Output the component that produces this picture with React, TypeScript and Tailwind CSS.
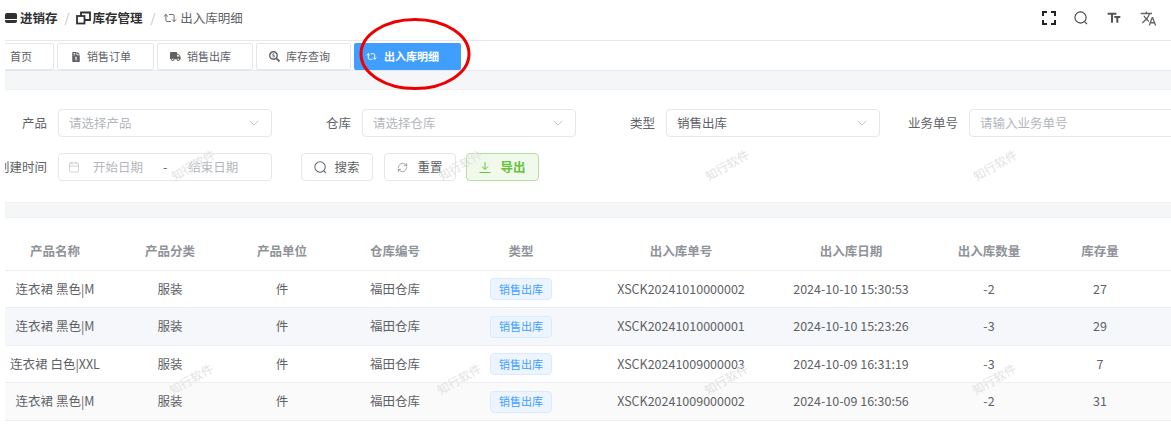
import React from "react";
import { ChevronDown, Calendar, RefreshCw, Repeat2 } from "lucide-react";
import { FaFileInvoiceDollar, FaTruck, FaSearchDollar } from "react-icons/fa";
import { MdTextFields, MdTranslate } from "react-icons/md";

const rows = [
  { name: "连衣裙 黑色|M", no: "XSCK20241010000002", date: "2024-10-10 15:30:53", qty: "-2", stock: "27", h: "h-[37px]", bg: "bg-white" },
  { name: "连衣裙 黑色|M", no: "XSCK20241010000001", date: "2024-10-10 15:23:26", qty: "-3", stock: "29", h: "h-[38px]", bg: "bg-[#f5f7fa]" },
  { name: "连衣裙 白色|XXL", no: "XSCK20241009000003", date: "2024-10-09 16:31:19", qty: "-3", stock: "7", h: "h-[37px]", bg: "bg-white" },
  { name: "连衣裙 黑色|M", no: "XSCK20241009000002", date: "2024-10-09 16:30:56", qty: "-2", stock: "31", h: "h-[38px]", bg: "bg-[#fafafa]" },
];

const cols = "grid grid-cols-[100px_130px_94px_132px_120px_200px_140px_136px_86px_28px] items-center text-center";

const marks = [
  { x: 169, y: 156 }, { x: 436, y: 156 }, { x: 703, y: 156 }, { x: 971, y: 156 },
  { x: 167, y: 370 }, { x: 435, y: 370 }, { x: 702, y: 370 }, { x: 970, y: 370 },
];

function SearchIcon({ size, color }: { size: number; color: string }) {
  return (
    <svg width={size} height={size} viewBox="0 0 14 14" fill="none" stroke={color} strokeWidth="1.1">
      <circle cx="6.5" cy="6.5" r="5.6" />
      <path d="M10.6 10.6l2.4 2.6" />
    </svg>
  );
}

function Tab({ icon, label, w, textGap }: { icon: React.ReactNode; label: string; w: string; textGap: string }) {
  return (
    <div className={`${w} h-[27px] pl-[12px] flex items-center ${textGap} bg-white border border-[#e4e7ed] rounded-[2px] text-[11px] text-[#606266]`}>
      {icon}
      <span>{label}</span>
    </div>
  );
}

function Field({ label, labelW, boxW, text, muted = true }: { label: string; labelW: string; boxW: string; text: string; muted?: boolean }) {
  return (
    <div className="flex items-center">
      <span className={`${labelW} text-right pr-[11px] text-[12.5px] text-[#606266]`}>{label}</span>
      <div className={`${boxW} h-[28px] flex items-center justify-between pl-[10px] pr-[9px] border border-[#e4e7ed] rounded-[4px] text-[12.5px] ${muted ? "text-[#b4b7bd]" : "text-[#606266]"}`}>
        <span>{text}</span>
        <ChevronDown size={16} strokeWidth={1} className="text-[#a8abb2]" />
      </div>
    </div>
  );
}

export default function App() {
  return (
    <div className="relative w-[1171px] h-[424px] overflow-hidden bg-white font-['Noto_Sans_CJK_SC','Noto_Sans',sans-serif]">
      {/* top bar */}
      <div className="h-[40px] pb-[4px] pl-[5px] pr-[14px] flex items-center justify-between">
        <div className="flex items-center text-[12.5px] font-bold text-[#303133]">
          <span className="w-[12px] h-[10px] mr-[3px] rounded-[2px] bg-[#303133] border-t-[3px] border-[#303133] flex items-center">
            <span className="w-full h-px bg-white" />
          </span>
          <span>进销存</span>
          <span className="mx-[7px] font-normal text-[#c0c4cc]">/</span>
          <svg width="15" height="14" viewBox="0 0 15 14" fill="none" stroke="#303133" strokeWidth="1.8" className="mr-[1px]">
            <rect x="1" y="5" width="7.5" height="7.5" />
            <path d="M5 5V1.5h9v7.5h-5.5" />
          </svg>
          <span>库存管理</span>
          <span className="mx-[8px] font-normal text-[#c0c4cc]">/</span>
          <Repeat2 size={14} className="text-[#606266] mr-[3px]" strokeWidth={1.6} />
          <span className="font-normal text-[#606266]">出入库明细</span>
        </div>
        <div className="flex items-center gap-[18px]">
          <svg width="14" height="14" viewBox="0 0 14 14" fill="none" stroke="#222" strokeWidth="2">
            <path d="M1 5V1h4M9 1h4v4M13 9v4H9M5 13H1V9" />
          </svg>
          <SearchIcon size={14} color="#444" />
          <MdTextFields size={16} className="text-[#555]" />
          <MdTranslate size={17} className="text-[#666]" />
        </div>
      </div>

      <div className="ml-[5px] border-t border-[#e6e8eb]">
        {/* tabs */}
        <div className="h-[30px] flex items-start gap-[3px] pt-[2px] border-b border-[#e6e8eb]">
          <div className="w-[49px] h-[27px] pl-[5px] flex items-center bg-white border border-l-0 border-[#e4e7ed] rounded-r-[2px] text-[11px] text-[#606266]">
            首页
          </div>
          <Tab label="销售订单" w="w-[97px]" textGap="gap-[6px]" icon={<FaFileInvoiceDollar size={10} className="text-[#606266] ml-[1px]" />} />
          <Tab label="销售出库" w="w-[96px]" textGap="gap-[6px]" icon={<FaTruck size={11} className="text-[#606266]" />} />
          <Tab label="库存查询" w="w-[95px]" textGap="gap-[6px]" icon={<FaSearchDollar size={11} className="text-[#606266]" />} />
          <div className="w-[107px] h-[27px] pl-[12px] flex items-center gap-[7px] bg-[#409eff] rounded-[2px] text-[11px] font-bold text-white">
            <Repeat2 size={11} />
            <span>出入库明细</span>
          </div>
        </div>
        <div className="h-[19px] bg-[#f5f6f8] border-b border-[#eef0f2]" />

        {/* filter form */}
        <div className="h-[112px] pt-[19px] flex flex-col gap-[16px]">
          <div className="flex items-center">
            <Field label="产品" labelW="w-[53px]" boxW="w-[214px]" text="请选择产品" />
            <Field label="仓库" labelW="w-[90px]" boxW="w-[214px]" text="请选择仓库" />
            <Field label="类型" labelW="w-[90px]" boxW="w-[214px]" text="销售出库" muted={false} />
            <div className="flex items-center">
              <span className="w-[89px] text-right pr-[11px] text-[12.5px] text-[#606266]">业务单号</span>
              <div className="w-[210px] h-[28px] pl-[10px] flex items-center border border-[#e4e7ed] rounded-[4px] text-[12.5px] text-[#b4b7bd]">
                请输入业务单号
              </div>
            </div>
          </div>
          <div className="flex items-center">
            <span className="w-[53px] shrink-0 overflow-hidden whitespace-nowrap flex justify-end pr-[11px] text-[12.5px] text-[#606266]">创建时间</span>
            <div className="w-[214px] h-[28px] flex items-center pl-[9px] border border-[#e4e7ed] rounded-[4px] text-[12.5px] text-[#b4b7bd]">
              <Calendar size={12} strokeWidth={1} className="text-[#a8abb2]" />
              <span className="ml-[13px]">开始日期</span>
              <span className="ml-[20px] text-[#606266]">-</span>
              <span className="ml-[21px]">结束日期</span>
            </div>
            <div className="ml-[29px] flex items-center gap-[11px]">
              <div className="w-[72px] h-[28px] flex items-center justify-center gap-[7px] border border-[#e4e7ed] rounded-[4px] text-[12.5px] text-[#606266]">
                <SearchIcon size={13} color="#606266" />
                <span>搜索</span>
              </div>
              <div className="w-[72px] h-[28px] flex items-center justify-center gap-[9px] border border-[#e4e7ed] rounded-[4px] text-[12.5px] text-[#606266]">
                <RefreshCw size={11} strokeWidth={1.2} />
                <span>重置</span>
              </div>
              <div className="-ml-[1px] w-[73px] h-[28px] flex items-center justify-center gap-[9px] bg-[#f0f9eb] border border-[#b3e19d] rounded-[4px] text-[12.5px] font-bold text-[#67c23a]">
                <svg width="12" height="12" viewBox="0 0 12 12" fill="none" stroke="#67c23a" strokeWidth="1">
                  <path d="M6 1v7M3 5.5L6 8.5l3-3M0.5 11.5h11" />
                </svg>
                <span>导出</span>
              </div>
            </div>
          </div>
        </div>
        <div className="h-[16px] bg-[#f5f6f8] border-y border-[#eef0f2]" />

        {/* table */}
        <div className="pt-[16px]">
          <div className={`${cols} h-[37px] pb-[1px] border-b border-[#ebeef5] text-[12.5px] font-bold text-[#909399]`}>
            {["产品名称", "产品分类", "产品单位", "仓库编号", "类型", "出入库单号", "出入库日期", "出入库数量", "库存量"].map((t) => (
              <span key={t}>{t}</span>
            ))}
          </div>
          {rows.map((r) => (
            <div key={r.no} className={`${cols} ${r.h} ${r.bg} border-b border-[#ebeef5] text-[12.5px] text-[#606266]`}>
              <span className="whitespace-nowrap">{r.name}</span>
              <span>服装</span>
              <span>件</span>
              <span>福田仓库</span>
              <span className="flex justify-center">
                <span className="w-[62px] h-[22px] flex items-center justify-center bg-[#ecf5ff] border border-[#d9ecff] rounded-[4px] text-[11px] text-[#409eff]">销售出库</span>
              </span>
              <span>{r.no}</span>
              <span className="whitespace-nowrap">{r.date}</span>
              <span>{r.qty}</span>
              <span>{r.stock}</span>
              <span />
            </div>
          ))}
        </div>
      </div>

      {/* watermark */}
      {marks.map((m) => (
        <span key={`${m.x}-${m.y}`} style={{ left: m.x, top: m.y }} className="absolute -rotate-[30deg] text-[12px] text-[#e3e3e3] whitespace-nowrap pointer-events-none">
          知行软件
        </span>
      ))}

      {/* red annotation circle */}
      <svg width="116" height="76" viewBox="0 0 116 76" fill="none" className="absolute left-[358px] top-[17px] pointer-events-none">
        <ellipse cx="57" cy="37" rx="54" ry="34.5" stroke="#ee0000" strokeWidth="3" />
      </svg>
    </div>
  );
}
